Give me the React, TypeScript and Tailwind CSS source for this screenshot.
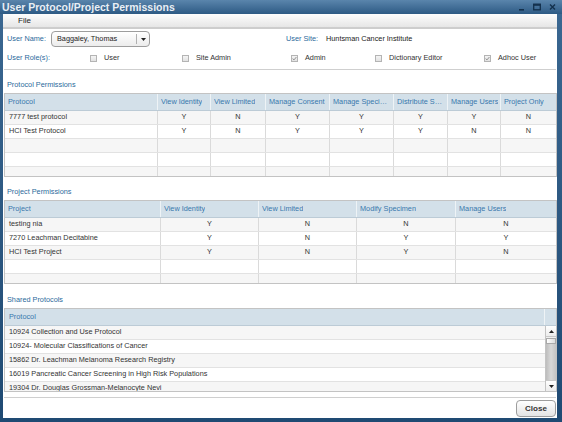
import React from 'react';

type Row = string[];

const protocolHeaders = [
  'Protocol',
  'View Identity',
  'View Limited',
  'Manage Consent',
  'Manage Specimens',
  'Distribute Specimens',
  'Manage Users',
  'Project Only',
];

const protocolRows: Row[] = [
  ['7777 test protocol', 'Y', 'N', 'Y', 'Y', 'Y', 'Y', 'N'],
  ['HCI Test Protocol', 'Y', 'N', 'Y', 'Y', 'Y', 'N', 'N'],
  ['', '', '', '', '', '', '', ''],
  ['', '', '', '', '', '', '', ''],
  ['', '', '', '', '', '', '', ''],
];

const projectHeaders = ['Project', 'View Identity', 'View Limited', 'Modify Specimen', 'Manage Users'];

const projectRows: Row[] = [
  ['testing nia', 'Y', 'N', 'N', 'N'],
  ['7270 Leachman Decitabine', 'Y', 'N', 'Y', 'Y'],
  ['HCI Test Project', 'Y', 'N', 'Y', 'N'],
  ['', '', '', '', ''],
  ['', '', '', '', ''],
];

const sharedRows = [
  '10924 Collection and Use Protocol',
  '10924- Molecular Classifications of Cancer',
  '15862 Dr. Leachman Melanoma Research Registry',
  '16019 Pancreatic Cancer Screening in High Risk Populations',
  '19304 Dr. Douglas Grossman-Melanocyte Nevi',
];

const roles = [
  { label: 'User', checked: false, w: 'w-[92px]' },
  { label: 'Site Admin', checked: false, w: 'w-[109px]' },
  { label: 'Admin', checked: true, w: 'w-[84px]' },
  { label: 'Dictionary Editor', checked: false, w: 'w-[109px]' },
  { label: 'Adhoc User', checked: true, w: 'w-[70px]' },
];

const Checkbox = ({ checked }: { checked: boolean }) => (
  <span className="w-[7px] h-[7px] mr-[7px] border border-[#b4b4b4] bg-gradient-to-b from-[#f4f4f4] to-[#e2e2e2] flex items-center justify-center">
    {checked && (
      <svg width="5" height="5" viewBox="0 0 5 5">
        <path d="M0.6 2.6 L2 3.9 L4.4 1" fill="none" stroke="#8a8a8a" strokeWidth="0.9" />
      </svg>
    )}
  </span>
);

const SectionLabel = ({ text, mt }: { text: string; mt: string }) => (
  <div className={`${mt} h-[15px] pl-[4px] flex items-center text-[#2b6a9b]`}>{text}</div>
);

const GridTable = ({ headers, rows, cols }: { headers: string[]; rows: Row[]; cols: string }) => (
  <div className="ml-[1px] h-[84px] border border-[#c3c3c3] overflow-hidden">
    <div className={`grid ${cols} h-[17px] bg-[#d3e0e9] border-b border-[#bccbd6]`}>
      {headers.map((h, i) => (
        <div
          key={h}
          className={`pl-[3px] pr-[1px] flex items-center text-[#3878ad] whitespace-nowrap overflow-hidden ${
            i < headers.length - 1 ? 'border-r border-[#eef3f6]' : ''
          }`}
        >
          <span className={h.length > 14 ? 'truncate' : 'overflow-hidden'}>{h}</span>
        </div>
      ))}
    </div>
    {rows.map((row, r) => (
      <div
        key={r}
        className={`grid ${cols} h-[14px] border-b border-[#e2e2e2] ${r % 2 === 0 ? 'bg-[#f6f6f6]' : 'bg-white'}`}
      >
        {row.map((cell, i) => (
          <div
            key={i}
            className={`px-[4px] flex items-center whitespace-nowrap overflow-hidden ${
              i > 0 ? 'justify-center' : ''
            } ${i < row.length - 1 ? 'border-r border-[#dadada]' : ''}`}
          >
            {cell}
          </div>
        ))}
      </div>
    ))}
  </div>
);

const SharedTable = () => (
  <div className="ml-[1px] h-[84px] border border-[#c3c3c3] overflow-hidden flex flex-col">
    <div className="h-[17px] bg-[#d3e0e9] border-b border-[#bccbd6] flex">
      <div className="flex-1 px-[4px] flex items-center text-[#3878ad] border-r border-[#eef3f6]">Protocol</div>
      <div className="w-[11px]" />
    </div>
    <div className="flex flex-1 overflow-hidden">
      <div className="flex-1 overflow-hidden">
        {sharedRows.map((p, r) => (
          <div
            key={p}
            className={`h-[14px] px-[4px] flex items-center whitespace-nowrap border-b border-[#e2e2e2] ${
              r % 2 === 0 ? 'bg-[#f6f6f6]' : 'bg-white'
            }`}
          >
            {p}
          </div>
        ))}
      </div>
      <div className="w-[11px] border-l border-[#c3c3c3] flex flex-col bg-[#f0f0f0]">
        <div className="h-[11px] border-b border-[#c8c8c8] bg-gradient-to-b from-white to-[#ececec] flex items-center justify-center">
          <svg width="5" height="3" viewBox="0 0 5 3">
            <polygon points="0,3 5,3 2.5,0" fill="#222" />
          </svg>
        </div>
        <div className="h-[6px] mt-[1px] border border-[#a9a9a9] bg-gradient-to-r from-white to-[#dcdcdc]" />
        <div className="flex-1 bg-gradient-to-r from-[#bdbdbd] via-[#d8d8d8] to-[#c4c4c4]" />
        <div className="h-[11px] border-t border-[#c8c8c8] bg-gradient-to-b from-white to-[#ececec] flex items-center justify-center">
          <svg width="5" height="3" viewBox="0 0 5 3">
            <polygon points="0,0 5,0 2.5,3" fill="#222" />
          </svg>
        </div>
      </div>
    </div>
  </div>
);

export default function App() {
  return (
    <div className="w-[562px] h-[422px] flex flex-col bg-gradient-to-b from-[#3b6892] to-[#1f4a73] font-['Liberation_Sans',Arial,sans-serif] text-[7.3px] text-[#333] overflow-hidden">
      {/* title bar */}
      <div className="h-[14px] flex items-center bg-gradient-to-b from-[#5a85ac] to-[#2d5a84] pl-[2px] pr-[6px]">
        <span className="text-[10.5px] font-bold text-[#e9eff5] leading-none">User Protocol/Project Permissions</span>
        <div className="ml-auto flex items-center gap-[8px]">
          <svg width="7" height="8" viewBox="0 0 7 8">
            <rect x="1" y="6" width="5" height="1.6" fill="#13304c" />
          </svg>
          <svg width="8" height="8" viewBox="0 0 8 8">
            <rect x="0.7" y="1.2" width="6.6" height="5.6" fill="none" stroke="#13304c" strokeWidth="1.3" />
            <rect x="0.7" y="1.2" width="6.6" height="1.6" fill="#13304c" />
          </svg>
          <svg width="7" height="8" viewBox="0 0 7 8">
            <path d="M1 1.5 L6 6.5 M6 1.5 L1 6.5" stroke="#13304c" strokeWidth="1.4" />
          </svg>
        </div>
      </div>

      <div className="flex-1 ml-[3px] mr-[5px] mb-[4px] bg-white flex flex-col">
        {/* menu */}
        <div className="h-[15px] bg-gradient-to-b from-[#fdfdfd] to-[#e6e6e6] border-b-2 border-[#cdcdcd] flex items-center pl-[15px] text-[8px] text-[#222]">
          File
        </div>

        {/* user row */}
        <div className="mt-[2px] h-[16px] pl-[4px] flex items-center">
          <span className="w-[44px] text-[#2b6a9b]">User Name:</span>
          <div className="w-[99px] h-[16px] rounded-[4px] border border-[#9d9d9d] bg-gradient-to-b from-white to-[#ececec] flex items-center">
            <span className="flex-1 pl-[5px] text-[#222]">Baggaley, Thomas</span>
            <div className="w-[13px] h-[10px] border-l border-[#b0b0b0] flex items-center justify-center">
              <svg width="5" height="3" viewBox="0 0 5 3">
                <polygon points="0,0 5,0 2.5,3" fill="#222" />
              </svg>
            </div>
          </div>
          <span className="ml-[136px] w-[40px] text-[#2b6a9b]">User Site:</span>
          <span className="text-[#222]">Huntsman Cancer Institute</span>
        </div>

        {/* roles */}
        <div className="mt-[4px] h-[14px] pl-[4px] flex items-center">
          <span className="w-[83px] text-[#2b6a9b]">User Role(s):</span>
          {roles.map((r) => (
            <div key={r.label} className={`${r.w} flex items-center`}>
              <Checkbox checked={r.checked} />
              <span className="text-[#333]">{r.label}</span>
            </div>
          ))}
        </div>

        <div className="mt-[4px] mx-[1px] h-[1px] bg-[#cfcfcf]" />

        <SectionLabel text="Protocol Permissions" mt="mt-[8px]" />
        <GridTable
          headers={protocolHeaders}
          rows={protocolRows}
          cols="grid-cols-[153px_53px_55px_64px_64px_54px_53px_1fr]"
        />

        <SectionLabel text="Project Permissions" mt="mt-[8px]" />
        <GridTable headers={projectHeaders} rows={projectRows} cols="grid-cols-[156px_98px_98px_99px_1fr]" />

        <SectionLabel text="Shared Protocols" mt="mt-[9px]" />
        <SharedTable />

        <div className="mt-[5px] mx-[1px] h-[1px] bg-[#cfcfcf]" />

        <div className="mt-[2px] flex justify-end pr-[1px]">
          <button className="w-[40px] h-[17px] rounded-[4px] border border-[#9d9d9d] bg-gradient-to-b from-white to-[#e4e4e4] text-[8px] font-bold text-[#333]">
            Close
          </button>
        </div>
      </div>
    </div>
  );
}
